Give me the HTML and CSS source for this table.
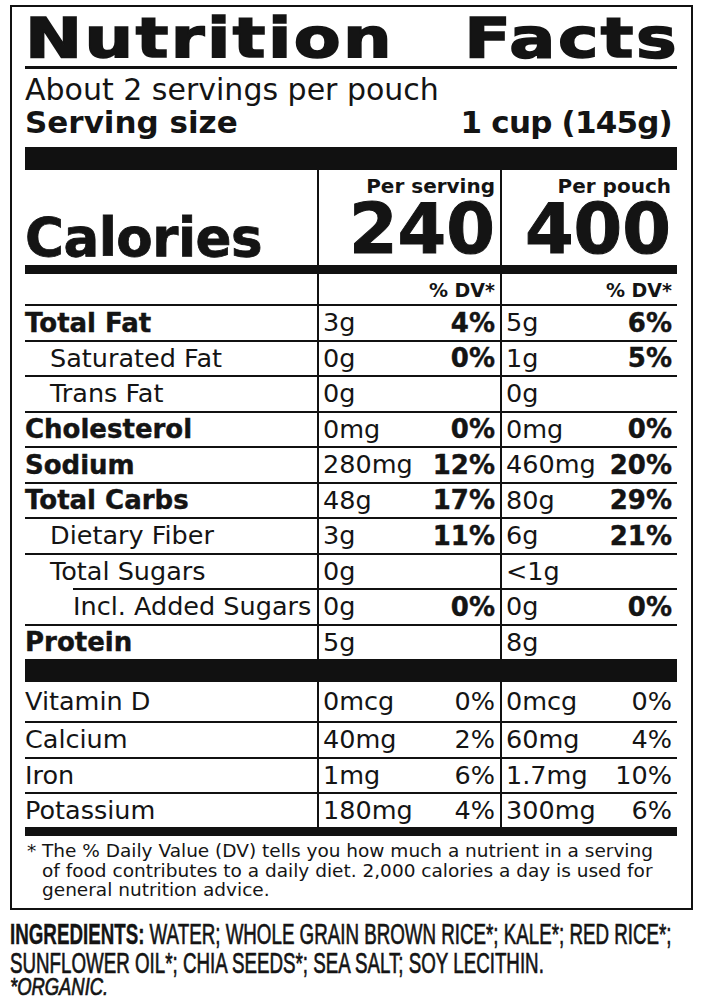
FILE: index.html
```html
<!DOCTYPE html>
<html lang="en">
<head>
<meta charset="utf-8">
<title>Nutrition Facts</title>
<link rel="stylesheet" href="styles.css">
</head>
<body>
<div class="page">
  <section class="label">
    <h1 class="title"><span class="t-left">Nutrition</span><span class="t-right">Facts</span></h1>
    <div class="rule"></div>
    <p class="servings">About 2 servings per pouch</p>
    <div class="serving-size"><span>Serving size</span><span class="amount">1 cup (145g)</span></div>
    <div class="bar bar-lg"></div>
    <div class="cal">
      <div class="cal-label">Calories</div>
      <div class="cal-col c2"><span class="per">Per serving</span><span class="kcal">240</span></div>
      <div class="cal-col c3"><span class="per">Per pouch</span><span class="kcal">400</span></div>
    </div>
    <div class="bar bar-md"></div>
    <div class="row dvrow">
      <div class="c1"></div>
      <div class="c2"><span class="dv">% DV*</span></div>
      <div class="c3"><span class="dv">% DV*</span></div>
    </div>
    <div class="nutrients">
      <div class="row"><div class="c1 b">Total Fat</div><div class="c2"><span>3g</span><b>4%</b></div><div class="c3"><span>5g</span><b>6%</b></div></div>
      <div class="row"><div class="c1 ind1">Saturated Fat</div><div class="c2"><span>0g</span><b>0%</b></div><div class="c3"><span>1g</span><b>5%</b></div></div>
      <div class="row"><div class="c1 ind1">Trans Fat</div><div class="c2"><span>0g</span></div><div class="c3"><span>0g</span></div></div>
      <div class="row"><div class="c1 b">Cholesterol</div><div class="c2"><span>0mg</span><b>0%</b></div><div class="c3"><span>0mg</span><b>0%</b></div></div>
      <div class="row"><div class="c1 b">Sodium</div><div class="c2"><span>280mg</span><b>12%</b></div><div class="c3"><span>460mg</span><b>20%</b></div></div>
      <div class="row"><div class="c1 b">Total Carbs</div><div class="c2"><span>48g</span><b>17%</b></div><div class="c3"><span>80g</span><b>29%</b></div></div>
      <div class="row"><div class="c1 ind1">Dietary Fiber</div><div class="c2"><span>3g</span><b>11%</b></div><div class="c3"><span>6g</span><b>21%</b></div></div>
      <div class="row"><div class="c1 ind1">Total Sugars</div><div class="c2"><span>0g</span></div><div class="c3"><span>&lt;1g</span></div></div>
      <div class="row sub2"><div class="c1 ind2">Incl. Added Sugars</div><div class="c2"><span>0g</span><b>0%</b></div><div class="c3"><span>0g</span><b>0%</b></div></div>
      <div class="row"><div class="c1 b">Protein</div><div class="c2"><span>5g</span></div><div class="c3"><span>8g</span></div></div>
    </div>
    <div class="bar bar-lg2"></div>
    <div class="vitamins">
      <div class="row v1"><div class="c1">Vitamin D</div><div class="c2"><span>0mcg</span><span>0%</span></div><div class="c3"><span>0mcg</span><span>0%</span></div></div>
      <div class="row v2"><div class="c1">Calcium</div><div class="c2"><span>40mg</span><span>2%</span></div><div class="c3"><span>60mg</span><span>4%</span></div></div>
      <div class="row v3"><div class="c1">Iron</div><div class="c2"><span>1mg</span><span>6%</span></div><div class="c3"><span>1.7mg</span><span>10%</span></div></div>
      <div class="row v4"><div class="c1">Potassium</div><div class="c2"><span>180mg</span><span>4%</span></div><div class="c3"><span>300mg</span><span>6%</span></div></div>
    </div>
    <div class="bar bar-md"></div>
    <div class="footnote">
      <span class="star">*</span>
      <p>The % Daily Value (DV) tells you how much a nutrient in a serving<br>of food contributes to a daily diet. 2,000 calories a day is used for<br>general nutrition advice.</p>
    </div>
  </section>
  <div class="ingr">
    <div class="ln"><span class="sq"><b>INGREDIENTS:</b> WATER; WHOLE GRAIN BROWN RICE*; KALE*; RED RICE*;</span></div>
    <div class="ln"><span class="sq">SUNFLOWER OIL*; CHIA SEEDS*; SEA SALT; SOY LECITHIN.</span></div>
    <div class="ln org"><span class="sq">*ORGANIC.</span></div>
  </div>
</div>
</body>
</html>
```
FILE: styles.css
```css
* { box-sizing: border-box; }
html, body { margin: 0; padding: 0; background: #fff; }
body { color: #141414; font-family: "DejaVu Sans", sans-serif; }
.page { width: 704px; height: 1000px; padding: 5px 0 0 10px; overflow: hidden; }

.label { width: 683px; border: 2px solid #111; padding: 0 14px 0 13px; }

.title {
  margin: 3px 0 0; height: 56px; display: flex; justify-content: space-between;
  font: bold 56px/56px "DejaVu Sans", sans-serif; letter-spacing: 2px;
  -webkit-text-stroke: 1.6px #141414; white-space: nowrap;
}
.title span { display: inline-block; transform: scaleX(1.22); }
.t-left { transform-origin: left center; }
.t-right { transform-origin: right center; margin-right: -2px; }

.rule { height: 3px; background: #111; }
.servings { margin: 5px 0 0; font: 30px/32px "DejaVu Sans", sans-serif; }
.serving-size {
  display: flex; justify-content: space-between; padding-right: 5px;
  font: bold 31px/32px "DejaVu Sans", sans-serif;
}
.amount { letter-spacing: -0.8px; }

.bar { background: #111; }
.bar-lg { margin-top: 9px; height: 23px; }
.bar-md { height: 9px; }
.bar-lg2 { height: 23px; }

.cal, .row { display: grid; grid-template-columns: 292px 183px 177px; }
.cal { height: 95px; }
.cal-label {
  display: flex; align-items: flex-end; padding-bottom: 1px;
  font: bold 53px/53px "DejaVu Sans", sans-serif; letter-spacing: -0.5px;
  -webkit-text-stroke: 0.8px #141414;
}
.cal-col {
  display: flex; flex-direction: column; align-items: flex-end;
  border-left: 2px solid #111; padding: 5px 5px 0 0;
}
.cal-col.c3 { padding-right: 6px; }
.per { font: bold 20px/22px "DejaVu Sans", sans-serif; }
.kcal { font: bold 70px/64px "DejaVu Sans", sans-serif; -webkit-text-stroke: 1px #141414; }

.row > div { display: flex; align-items: center; font: 25.5px/1 "DejaVu Sans", sans-serif; white-space: nowrap; }
.row .c2, .row .c3 { border-left: 2px solid #111; justify-content: space-between; padding: 0 5px 0 4px; }
.row b, .row .b { font-weight: bold; font-size: 26px; -webkit-text-stroke: 0.4px #141414; }
.ind1 { padding-left: 25px; }
.ind2 { padding-left: 48px; }

.dvrow { height: 32px; border-bottom: 2px solid #111; }
.row.dvrow .c2, .row.dvrow .c3 { justify-content: flex-end; align-items: flex-start; padding-top: 2px; }
.dvrow .c3 { padding-right: 5px; }
.dv { font: bold 19px/28px "DejaVu Sans", sans-serif; }

.nutrients .row { height: 35.5px; border-top: 2px solid #111; }
.nutrients .row:first-child { height: 33.5px; border-top: 0; }
.nutrients .row.sub2 {
  border-top-color: transparent;
  background: linear-gradient(#111, #111) no-repeat right top / calc(100% - 48px) 2px;
  background-origin: border-box;
}

.vitamins .row { border-top: 2px solid #111; }
.vitamins .v1 { height: 38.5px; border-top: 0; }
.vitamins .v2 { height: 36px; }
.vitamins .v3 { height: 35.5px; }
.vitamins .v4 { height: 35px; }

.footnote {
  display: grid; grid-template-columns: 18px 1fr; padding: 5px 0 8.5px;
  font: 18.5px/19.5px "DejaVu Sans", sans-serif;
}
.star { padding-left: 2px; }
.footnote p { margin: 0 0 0 -1px; white-space: nowrap; }

.ingr { margin-top: 9px; font: 30px "Liberation Sans", Arial, sans-serif; }
.ln { height: 29px; line-height: 29px; white-space: nowrap; }
.sq { display: inline-block; transform: scaleX(0.625); transform-origin: left center; -webkit-text-stroke: 0.7px #141414; }
.sq b { -webkit-text-stroke: 0.4px #141414; }
.org { height: 21px; line-height: 21px; font-size: 23px; font-style: italic; }
.org .sq { transform: scaleX(0.8); }
```
